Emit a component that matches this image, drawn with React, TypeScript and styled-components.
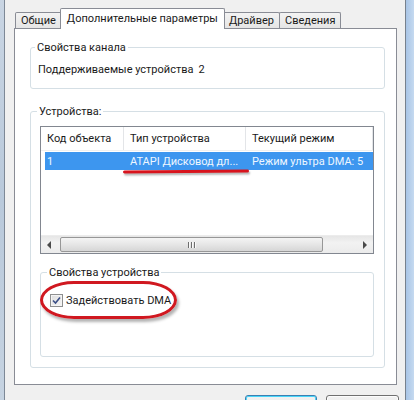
import styled, { createGlobalStyle } from 'styled-components'

const GlobalStyle = createGlobalStyle`
    html, body {
        margin: 0;
        padding: 0;
        background: #f0f0f0;
    }
    body {
        font-family: Roboto, 'Liberation Sans', sans-serif;
        font-size: 11px;
        color: #1a1a1a;
    }
`

const Window = styled.div`
    display: flex;
    width: 414px;
    height: 400px;
    overflow: hidden;
    background: #f0f0f0;
`

const LeftFrame = styled.div`
    width: 4px;
    flex-shrink: 0;
    background: linear-gradient(180deg, #c9d5e3, #b9c9db 50%, #c6d3e1);
    border-right: 1px solid #7d8896;
`

const RightFrame = styled.div`
    width: 8px;
    flex-shrink: 0;
    background: linear-gradient(90deg, #a9c5e6, #c6daf0);
    border-left: 1px solid #77818d;
`

const Dialog = styled.div`
    flex: 1;
    display: flex;
    flex-direction: column;
    padding: 8px 8px 0 9px;
    min-width: 0;
    & > * {
        flex-shrink: 0;
    }
`

const TabStrip = styled.div`
    display: flex;
    align-items: flex-end;
    height: 20px;
    padding-left: 1px;
    position: relative;
    z-index: 1;
`

const Tab = styled.div<{ $active?: boolean }>`
    box-sizing: border-box;
    height: ${({ $active }) => ($active ? 21 : 16)}px;
    margin-bottom: ${({ $active }) => ($active ? -1 : 0)}px;
    margin-left: ${({ $active }) => ($active ? -2 : -1)}px;
    margin-right: ${({ $active }) => ($active ? -1 : 0)}px;
    padding: 0 ${({ $active }) => ($active ? 6 : 5)}px;
    display: flex;
    align-items: ${({ $active }) => ($active ? 'flex-start' : 'center')};
    padding-top: ${({ $active }) => ($active ? 2 : 0)}px;
    border: 1px solid #898c95;
    border-bottom: none;
    border-radius: 2px 2px 0 0;
    background: ${({ $active }) =>
        $active ? '#ffffff' : 'linear-gradient(180deg, #f3f3f3, #e5e5e5)'};
    position: relative;
    z-index: ${({ $active }) => ($active ? 2 : 1)};
    white-space: nowrap;
    line-height: 15px;
    &:first-child {
        margin-left: 0;
    }
`

const Panel = styled.div`
    box-sizing: border-box;
    height: 357px;
    background: #ffffff;
    border: 1px solid #898c95;
    padding: 11px 11px 0 15px;
    display: flex;
    flex-direction: column;
    gap: 15px;
`

const Group = styled.fieldset<{ $pad: string; $top?: number }>`
    margin: ${({ $top }) => $top ?? 0}px 0 0 0;
    min-width: 0;
    border: 1px solid #d5dfe5;
    border-radius: 3px;
    padding: ${({ $pad }) => $pad};
    position: relative;
`

const Legend = styled.legend`
    padding: 0 2px;
    margin-left: -3px;
    line-height: 15px;
`

const InfoRow = styled.div`
    display: flex;
    line-height: 15px;
    white-space: nowrap;
`

const Count = styled.span`
    margin-left: 5px;
`

const ListView = styled.div`
    height: 128px;
    box-sizing: border-box;
    border: 1px solid #828790;
    display: flex;
    flex-direction: column;
    position: relative;
    background: #ffffff;
    overflow: hidden;
`

const HeaderRow = styled.div`
    display: flex;
    height: 23px;
    border-bottom: 1px solid #f0f0f0;
`

const HeaderCell = styled.div<{ $w: number }>`
    box-sizing: border-box;
    width: ${({ $w }) => $w}px;
    flex-shrink: 0;
    padding-left: 6px;
    display: flex;
    align-items: center;
    border-right: 1px solid #e3e5e8;
    white-space: nowrap;
`

const Row = styled.div<{ $selected?: boolean }>`
    display: flex;
    height: 18px;
    margin-top: 1px;
    margin-left: 4px;
    background: ${({ $selected }) => ($selected ? '#3d96ef' : 'transparent')};
    color: ${({ $selected }) => ($selected ? '#eef6ff' : '#1a1a1a')};
`

const Cell = styled.div<{ $w: number; $pad?: number }>`
    box-sizing: border-box;
    width: ${({ $w }) => $w}px;
    flex-shrink: 0;
    padding-left: ${({ $pad }) => $pad ?? 6}px;
    display: flex;
    align-items: center;
    white-space: nowrap;
`

const Underline = styled.div`
    position: absolute;
    left: 82px;
    top: 43px;
    width: 126px;
    height: 3px;
    border-radius: 2px;
    background: #d8141d;
    box-shadow: 1px 2px 2px rgba(0, 0, 0, 0.3);
    transform: rotate(-0.4deg);
`

const ScrollBar = styled.div`
    margin-top: auto;
    height: 17px;
    display: flex;
    align-items: stretch;
    background: linear-gradient(180deg, #e6e6e6, #f2f2f2 40%, #ebebeb);
    border-top: 1px solid #ececec;
`

const Arrow = styled.div`
    width: 17px;
    display: flex;
    align-items: center;
    justify-content: center;
    flex-shrink: 0;
`

const Track = styled.div`
    flex: 1;
    display: flex;
    padding: 1px 2px;
`

const Thumb = styled.div`
    box-sizing: border-box;
    width: 263px;
    border: 1px solid #979797;
    border-radius: 2px;
    background: linear-gradient(180deg, #f4f4f4, #e6e6e6 50%, #d6d6d6);
    display: flex;
    align-items: center;
    justify-content: center;
    gap: 2px;
`

const Grip = styled.span`
    width: 1px;
    height: 6px;
    background: #6e6e6e;
    box-shadow: 1px 0 0 #fafafa;
`

const CheckRow = styled.label`
    display: flex;
    align-items: center;
    gap: 3px;
    line-height: 15px;
    position: relative;
    white-space: nowrap;
`

const CheckBox = styled.span`
    box-sizing: border-box;
    width: 13px;
    height: 13px;
    border: 1px solid #8e8f8f;
    background: linear-gradient(135deg, #dcdcdc, #f6f6f6);
    box-shadow: inset 0 0 0 1px #f4f4f4;
    display: flex;
    align-items: center;
    justify-content: center;
`

const Ellipse = styled.div`
    position: absolute;
    left: -10px;
    top: -12px;
    width: 137px;
    height: 38px;
    box-sizing: border-box;
    border: 3px solid #d01820;
    border-radius: 34px / 19px;
    box-shadow: 2px 3px 3px rgba(0, 0, 0, 0.3);
    pointer-events: none;
`

const ButtonRow = styled.div`
    display: flex;
    justify-content: flex-end;
    gap: 9px;
    margin-top: 10px;
    margin-right: -2px;
`

const Button = styled.button<{ $default?: boolean }>`
    box-sizing: border-box;
    width: ${({ $default }) => ($default ? 72 : 73)}px;
    height: 23px;
    border: 1px solid ${({ $default }) => ($default ? '#3c7fb1' : '#707070')};
    border-radius: 3px;
    background: linear-gradient(180deg, #f2f2f2, #ebebeb 50%, #dddddd);
    box-shadow: ${({ $default }) =>
        $default ? 'inset 0 0 0 1px #48d6fa' : 'inset 0 0 0 1px #fcfcfc'};
    font-family: inherit;
    font-size: 11px;
    padding: 0;
`

const columns = [83, 122, 127]

export default function App() {
    return (
        <>
            <GlobalStyle />
            <Window>
                <LeftFrame />
                <Dialog>
                    <TabStrip>
                        <Tab>Общие</Tab>
                        <Tab $active>Дополнительные параметры</Tab>
                        <Tab>Драйвер</Tab>
                        <Tab>Сведения</Tab>
                    </TabStrip>
                    <Panel>
                        <Group $pad="7px 10px 11px 7px">
                            <Legend>Свойства канала</Legend>
                            <InfoRow>
                                Поддерживаемые устройства<Count>2</Count>
                            </InfoRow>
                        </Group>
                        <Group $pad="7px 10px 10px 9px">
                            <Legend>Устройства:</Legend>
                            <ListView>
                                <HeaderRow>
                                    <HeaderCell $w={columns[0]}>Код объекта</HeaderCell>
                                    <HeaderCell $w={columns[1]}>Тип устройства</HeaderCell>
                                    <HeaderCell $w={columns[2]}>Текущий режим</HeaderCell>
                                </HeaderRow>
                                <Row $selected>
                                    <Cell $w={columns[0] - 4} $pad={2}>
                                        1
                                    </Cell>
                                    <Cell $w={columns[1]}>ATAPI Дисковод дл...</Cell>
                                    <Cell $w={columns[2]}>Режим ультра DMA: 5</Cell>
                                </Row>
                                <Underline />
                                <ScrollBar>
                                    <Arrow>
                                        <svg width="5" height="8" viewBox="0 0 5 8">
                                            <path d="M4 0 L0 4 L4 8 Z" fill="#4a4a4a" />
                                        </svg>
                                    </Arrow>
                                    <Track>
                                        <Thumb>
                                            <Grip />
                                            <Grip />
                                            <Grip />
                                        </Thumb>
                                    </Track>
                                    <Arrow>
                                        <svg width="5" height="8" viewBox="0 0 5 8">
                                            <path d="M1 0 L5 4 L1 8 Z" fill="#4a4a4a" />
                                        </svg>
                                    </Arrow>
                                </ScrollBar>
                            </ListView>
                            <Group $pad="13px 10px 48px 9px" $top={11}>
                                <Legend>Свойства устройства</Legend>
                                <CheckRow>
                                    <CheckBox>
                                        <svg width="9" height="9" viewBox="0 0 9 9">
                                            <path
                                                d="M1 4.5 L3.5 7 L8 1.5"
                                                fill="none"
                                                stroke="#3b4f86"
                                                strokeWidth="1.6"
                                            />
                                        </svg>
                                    </CheckBox>
                                    Задействовать DMA
                                    <Ellipse />
                                </CheckRow>
                            </Group>
                        </Group>
                    </Panel>
                    <ButtonRow>
                        <Button $default>ОК</Button>
                        <Button>Отмена</Button>
                    </ButtonRow>
                </Dialog>
                <RightFrame />
            </Window>
        </>
    )
}
